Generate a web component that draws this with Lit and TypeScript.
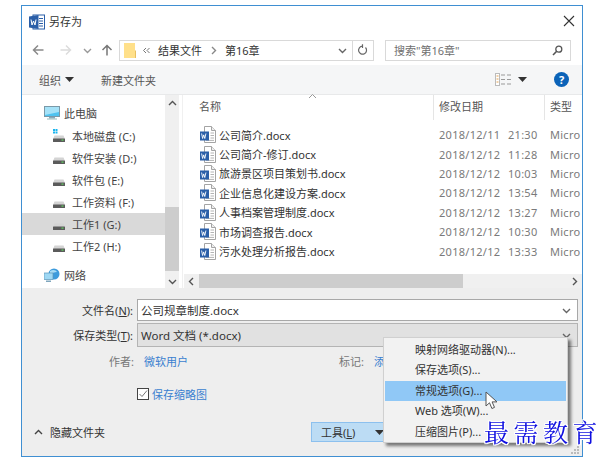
import { LitElement, html, css, svg } from "lit";
import { customElement } from "lit/decorators.js";

const wordBadge = svg`<rect x="0" y="4" width="9" height="9" fill="#2b5fa8"/><path d="M1.6 6l1 5 1.1-3.6 1.1 3.6 1.1-5" fill="none" stroke="#fff" stroke-width=".9"/>`;
const docIcon = html`<svg class="doc" width="16" height="17" viewBox="0 0 16 17"><path d="M4.5.5h7l4 4v12h-11z" fill="#fff" stroke="#a4a4a4"/><path d="M11.5.5v4h4" fill="#eee" stroke="#a4a4a4"/><path d="M10.5 7h3.5M10.5 9.5h3.5M10.5 12h3.5M6 14.4h8" stroke="#b4b4b4"/><g transform="translate(0,1.5)">${wordBadge}</g></svg>`;
const drive = (win = false) => html`<svg class="drive" width="14" height="14" viewBox="0 0 14 14">${win ? svg`<path d="M1 0h2v2H1zM3.5 0h2v2h-2zM1 2.500h2v2H1zM3.500 2.500h2v2h-2z" fill="#19b4ee"/>` : ""}<path d="M2.500 6.500h9l1.500 3.500H1z" fill="#d4d4d4"/><rect x="1" y="9.500" width="12" height="3.500" rx=".5" fill="#5b5b5b"/><rect x="9.500" y="10.500" width="2" height="1.200" fill="#5fd35f"/></svg>`;
const chevron = (d: string, c = "#555") => html`<svg width="9" height="9" viewBox="0 0 9 9"><path d="${d}" fill="none" stroke="${c}" stroke-width="1.400"/></svg>`;
const UP = "M1 6l3.500-3.500L8 6", DOWN = "M1 3l3.500 3.500L8 3", LEFT = "M6 1L2.500 4.500 6 8", RIGHT = "M3 1l3.500 3.500L3 8";
const caret = html`<svg width="9" height="5" viewBox="0 0 9 5"><path d="M0 0h9L4.500 5z" fill="#333"/></svg>`;

const drives = [["本地磁盘 (C:)", true], ["软件安装 (D:)", false], ["软件包 (E:)", false], ["工作资料 (F:)", false], ["工作1 (G:)", false, true], ["工作2 (H:)", false]] as const;
const files = [
  ["公司简介.docx", "2018/12/11", "21:30"],
  ["公司简介-修订.docx", "2018/12/12", "11:28"],
  ["旅游景区项目策划书.docx", "2018/12/12", "10:03"],
  ["企业信息化建设方案.docx", "2018/12/12", "13:54"],
  ["人事档案管理制度.docx", "2018/12/12", "13:27"],
  ["市场调查报告.docx", "2018/12/12", "10:30"],
  ["污水处理分析报告.docx", "2018/12/12", "13:33"],
];
const menu = ["映射网络驱动器(N)...", "保存选项(S)...", "常规选项(G)...", "Web 选项(W)...", "压缩图片(P)..."];

@customElement("app-root")
export class AppRoot extends LitElement {
  static styles = css`
    :host { display: block; width: 606px; height: 465px; background: #fff; overflow: hidden; position: relative;
      font: 11px "Noto Sans", "Noto Sans CJK SC", sans-serif; color: #333; }
    .page { padding: 5px 0 0 21px; filter: blur(.35px); }
    .dialog { position: relative; box-sizing: border-box; width: 562px; height: 452px; border: 1px solid #3f8fd2; display: flex; flex-direction: column; background: #fff; }
    svg { display: block; flex: none; }

    .title { height: 29px; display: flex; align-items: center; padding: 0 7px; gap: 4px; font-size: 11px; }
    .title .close { margin-left: auto; }
    .title .word { margin-top: 2px; }

    .nav { height: 30px; display: flex; align-items: center; padding-left: 10px; }
    .arrows { display: flex; align-items: center; width: 87px; }
    .addr { box-sizing: border-box; width: 255px; height: 21px; border: 1px solid #d9d9d9; display: flex; align-items: center; padding-left: 4px; color: #333; }
    .addr .crumb { margin-left: 7px; }
    .addr .gt { margin: 0 7px 0 7px; }
    .addr .end { margin-left: auto; display: flex; align-items: center; height: 100%; }
    .addr .sep { width: 1px; height: 100%; background: #d9d9d9; margin: 0 4px 0 5px; }
    .search { box-sizing: border-box; margin-left: 11px; width: 186px; height: 21px; border: 1px solid #d9d9d9; display: flex; align-items: center; padding: 0 7px 0 8px; justify-content: space-between; color: #707070; }

    .tools { box-sizing: border-box; height: 30px; background: #f5f6f7; border-bottom: 1px solid #e8e9ea; display: flex; align-items: center; padding-left: 17px; color: #555; }
    .tools .cr { margin-left: 4px; }
    .tools .new { margin-left: 27px; }
    .tools .view { margin-left: auto; display: flex; align-items: center; gap: 7px; }
    .tools .help { margin: 0 13px 0 27px; width: 15px; height: 15px; border-radius: 50%; background: #0b63b8; color: #fff; font-weight: 700; font-size: 11px; line-height: 15px; text-align: center; }

    .main { height: 193px; display: flex; }
    .tree { width: 143px; padding-top: 7px; box-sizing: border-box; }
    .ti { height: 22px; display: flex; align-items: center; gap: 6px; padding-left: 30px; margin-bottom: 0; color: #444; }
    .ti.top { padding-left: 22px; gap: 4px; margin-bottom: 1px; }
    .ti.sel { background: #d9d9d9; }
    .ti.net { margin-top: 7px; }
    .vbar { width: 14px; background: #f0f0f0; display: flex; flex-direction: column; align-items: center; }
    .vbar .btn { height: 17px; display: flex; align-items: center; justify-content: center; }
    .vbar .btn.dn { height: 14px; }
    .vbar .sp1 { height: 95px; }
    .vbar .thumb { height: 64px; width: 100%; background: #cdcdcd; }
    .vbar .sp2 { flex: 1; }
    .gutter { width: 4px; box-sizing: border-box; border-right: 1px solid #f0f0f0; }

    .list { flex: 1; display: flex; flex-direction: column; min-width: 0; }
    .head { height: 25px; display: grid; grid-template-columns: 250px 111px 1fr; position: relative; color: #555; }
    .head span { padding-left: 16px; line-height: 24px; }
    .head span + span { padding-left: 5px; border-left: 1px solid #e5e5e5; }
    .head .sort { position: absolute; left: 125px; top: -2px; }
    .rows { flex: 1; padding-top: 5px; overflow: hidden; }
    .row { height: 19.4px; display: grid; grid-template-columns: 16px 223px 69px 42px 40px; align-items: center; padding-left: 17px; white-space: nowrap; overflow: hidden; }
    .row .nm { padding-left: 3px; color: #333; }
    .row .d, .row .t, .row .ty { color: #7a7a7a; letter-spacing: .28px; }
    .hbar { height: 14px; background: #f0f0f0; display: flex; align-items: center; margin-left: 1px; }
    .hbar .b { width: 15px; display: flex; justify-content: center; }
    .hbar .th { width: 264px; height: 100%; background: #cdcdcd; }
    .hbar .sp { flex: 1; }

    .bottom { flex: 1; background: #eeeeee; padding-top: 11px; position: relative; }
    .frow { display: flex; align-items: center; }
    .lab { width: 111px; text-align: right; color: #333; flex: none; }
    .field { box-sizing: border-box; margin-left: 4px; width: 441px; display: flex; align-items: center; justify-content: space-between; padding: 0 6px 0 3px; font-size: 11.5px; }
    .f1 { height: 22px; background: #fff; border: 1px solid #a8a8a8; }
    .f2 { height: 24px; background: #e1e1e1; border: 1px solid #b4b4b4; }
    .r2 { margin-top: 2px; }
    .meta { height: 20px; margin-top: 4px; }
    .meta .lab { color: #777; width: 112px; }
    .meta a { color: #3a7fd0; margin-left: 10px; }
    .meta .tag { margin-left: 151px; color: #777; }
    .thumbrow { margin-top: 17px; padding-left: 115px; gap: 3px; color: #3a7fd0; height: 12px; }
    .cb { box-sizing: border-box; width: 12px; height: 12px; border: 1px solid #444; background: #fff; }
    .foot { display: flex; align-items: flex-start; margin-top: 22px; height: 21px; padding-left: 12px; }
    .hide { display: flex; align-items: center; gap: 7px; height: 20px; color: #333; }
    .toolbtn { box-sizing: border-box; margin-left: 206px; width: 73px; height: 20px; background: #bcdcf4; border: 1px solid #8cc0ee; display: flex; align-items: center; padding-left: 9px; gap: 20px; white-space: nowrap; flex: none; }
    .save { box-sizing: border-box; margin-left: 11px; width: 82px; height: 21px; background: #e1e1e1; border: 1px solid #2f7fd0; }
    .grip { position: absolute; right: 2px; bottom: 1px; }

    .menu { position: absolute; left: 361px; top: 331px; box-sizing: border-box; width: 185px; height: 106px; padding-top: 2px; background: #f2f2f2; border: 1px solid #d0d0d0; box-shadow: 3px 3px 3px rgba(0,0,0,.5); color: #333; }
    .mi { height: 20.4px; line-height: 20px; padding-left: 30px; margin: 0 1px; }
    .mi.on { background: #90c8f6; }
    .cursor { position: absolute; left: 463px; top: 385px; }
    .mark { position: absolute; left: 484px; top: 416px; font: 400 25px/30px "Noto Serif CJK SC", "Noto Sans CJK SC", serif; letter-spacing: 4.5px; color: #1010e0; white-space: nowrap;
      text-shadow: -1px 0 #fff, 1px 0 #fff, 0 -1px #fff, 0 1px #fff, -1px -1px #fff, 1px 1px #fff, 1px -1px #fff, -1px 1px #fff; }
  `;

  render() {
    return html`<div class="page"><div class="dialog">
      <div class="title">
        <svg class="word" width="16" height="16" viewBox="0 0 16 16"><rect x="4" y="1" width="11.5" height="14" fill="#fff" stroke="#2b5fa8"/><path d="M10 4.5h4M10 7h4M10 9.5h4M10 12h4" stroke="#2b5fa8"/><path d="M0 2.5L9.500 1v14L0 13.500z" fill="#2b5fa8"/><path d="M2 5.500l1 5.500 1.500-4 1.500 4 1-5.500" fill="none" stroke="#fff"/></svg>
        <span>另存为</span>
        <svg class="close" width="12" height="12" viewBox="0 0 12 12"><path d="M1 1l10 10M11 1L1 11" stroke="#333" stroke-width="1.1"/></svg>
      </div>

      <div class="nav">
        <div class="arrows">
          <svg width="12" height="12" viewBox="0 0 12 12"><path d="M11.500 6H1.500M6 1.500L1.500 6 6 10.500" fill="none" stroke="#8a8a8a" stroke-width="1.5"/></svg>
          <svg style="margin-left:16px" width="12" height="12" viewBox="0 0 12 12"><path d="M.5 6h10M6 1.500L10.500 6 6 10.500" fill="none" stroke="#dcdcdc" stroke-width="1.5"/></svg>
          <span style="margin-left:11px">${chevron(DOWN, "#999")}</span>
          <svg style="margin-left:9px" width="12" height="12" viewBox="0 0 12 12"><path d="M6 11.500V1.500M1.500 6L6 1.500 10.500 6" fill="none" stroke="#777" stroke-width="1.5"/></svg>
        </div>
        <div class="addr">
          <svg width="12" height="15" viewBox="0 0 12 15"><path d="M0 0h11v15H0z" fill="#ffe08a"/><path d="M11 8l1-1v8h-1z" fill="#e8c060"/></svg>
          <svg style="margin-left:6px" width="9" height="9" viewBox="0 0 9 9"><path d="M4 2L1.500 4.500 4 7M7.500 2L5 4.500 7.500 7" fill="none" stroke="#777"/></svg>
          <span class="crumb">结果文件</span>
          <span class="gt">${chevron(RIGHT, "#888")}</span>
          <span>第16章</span>
          <span class="end">${chevron(DOWN, "#666")}<span class="sep"></span>
            <svg style="margin-right:5px" width="11" height="12" viewBox="0 0 11 12"><path d="M8.500 3.500a4 4 0 1 1-3-1.300M5.500.3v3.600" fill="none" stroke="#666" stroke-width="1.2"/></svg></span>
        </div>
        <div class="search"><span>搜索"第16章"</span>
          <svg width="11" height="11" viewBox="0 0 11 11"><circle cx="6.800" cy="4.200" r="3" fill="none" stroke="#555" stroke-width="1.3"/><path d="M4.700 6.300L1 10" stroke="#555" stroke-width="1.6"/></svg></div>
      </div>

      <div class="tools">
        <span>组织</span><span class="cr">${caret}</span><span class="new">新建文件夹</span>
        <span class="view">
          <svg width="16" height="13" viewBox="0 0 16 13"><rect x=".5" y=".5" width="4" height="12" fill="#fff" stroke="#bbb"/><path d="M1.500 3h2M1.500 6h2M1.500 9h2" stroke="#e0a050"/><path d="M6 2h4M12 2h4M6 6.500h4M12 6.500h4M6 11h4M12 11h4" stroke="#999"/></svg>
          ${caret}
        </span>
        <span class="help">?</span>
      </div>

      <div class="main">
        <div class="tree">
          <div class="ti top">
            <svg width="16" height="14" viewBox="0 0 16 14"><rect x=".5" y=".5" width="15" height="10" fill="#4fc3f0" stroke="#7a99a8"/><path d="M1 1h14v5L1 9z" fill="#a5e2f8"/><rect x="5" y="11" width="6" height="1.5" fill="#8ab"/><rect x="3" y="12.500" width="10" height="1" fill="#9bb"/></svg>
            此电脑</div>
          ${drives.map((d) => html`<div class="ti ${(d as any)[2] ? "sel" : ""}">${drive(d[1])}<span>${d[0]}</span></div>`)}
          <div class="ti top net">
            <svg width="16" height="15" viewBox="0 0 16 15"><circle cx="10" cy="6" r="5.5" fill="#3d9bdc"/><path d="M6 3c3-2 6-1 7 1-3 0-4 1-7 2z" fill="#a8dcf5"/><rect x="0" y="5" width="9" height="6.5" fill="#9ed8f4" stroke="#5a94b8" stroke-width=".7"/><rect x="2" y="12.500" width="5" height="1.5" fill="#7fa6bd"/></svg>
            网络</div>
        </div>
        <div class="vbar">
          <div class="btn">${chevron(UP)}</div><div class="sp1"></div><div class="thumb"></div><div class="sp2"></div><div class="btn dn">${chevron(DOWN)}</div>
        </div>
        <div class="gutter"></div>
        <div class="list">
          <div class="head"><span>名称</span><span>修改日期</span><span>类型</span>
            <svg class="sort" width="9" height="6" viewBox="0 0 9 6"><path d="M1 5l3.500-3.500L8 5" fill="none" stroke="#999"/></svg></div>
          <div class="rows">
            ${files.map((f) => html`<div class="row">${docIcon}<span class="nm">${f[0]}</span><span class="d">${f[1]}</span><span class="t">${f[2]}</span><span class="ty">Micro</span></div>`)}
          </div>
          <div class="hbar"><span class="b">${chevron(LEFT)}</span><span class="th"></span><span class="sp"></span><span class="b">${chevron(RIGHT)}</span></div>
        </div>
      </div>

      <div class="bottom">
        <div class="frow"><span class="lab">文件名(<u>N</u>):</span><div class="field f1"><span>公司规章制度.docx</span>${chevron(DOWN, "#666")}</div></div>
        <div class="frow r2"><span class="lab">保存类型(<u>T</u>):</span><div class="field f2"><span>Word 文档 (*.docx)</span>${chevron(DOWN, "#666")}</div></div>
        <div class="frow meta"><span class="lab">作者:</span><a>微软用户</a><span class="tag">标记:</span><a>添加标记</a></div>
        <div class="frow thumbrow"><span class="cb"><svg width="10" height="10" viewBox="0 0 10 10"><path d="M1.500 5l2.500 2.500L9 1.500" fill="none" stroke="#777"/></svg></span><span>保存缩略图</span></div>
        <div class="foot">
          <span class="hide">${chevron(UP, "#444")}<span>隐藏文件夹</span></span>
          <span class="toolbtn"><span>工具(<u>L</u>)</span>${caret}</span>
          <span class="save"></span>
        </div>
        <svg class="grip" width="9" height="9" viewBox="0 0 9 9"><path d="M6 0h2v2H6zM3 3h2v2H3zM6 3h2v2H6zM0 6h2v2H0zM3 6h2v2H3zM6 6h2v2H6z" fill="#bbb"/></svg>
      </div>

      <div class="menu">${menu.map((m, i) => html`<div class="mi ${i === 2 ? "on" : ""}">${m}</div>`)}</div>
      <svg class="cursor" width="14" height="19" viewBox="0 0 14 19"><path d="M1 1v14l3.500-3.200 2.400 5.700 2.600-1.100-2.400-5.500H12z" fill="#fff" stroke="#555"/></svg>
    </div>
    <span class="mark">最需教育</span>
    </div>`;
  }
}
